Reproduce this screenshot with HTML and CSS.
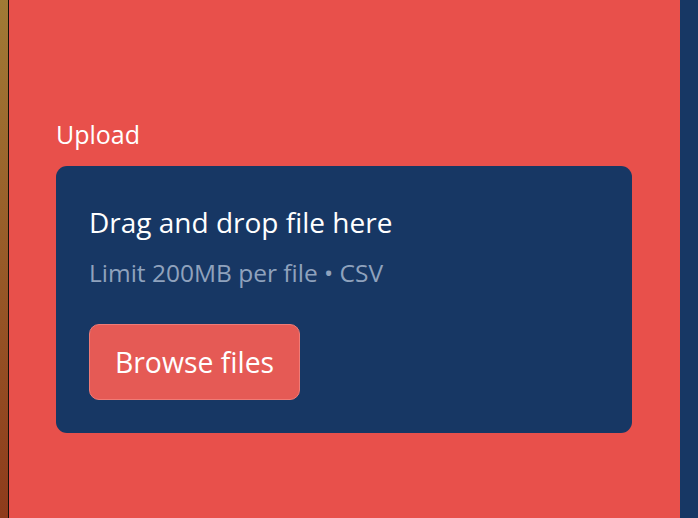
FILE: index.html
```html
<!DOCTYPE html>
<html>
<head>
<meta charset="utf-8">
<link rel="stylesheet" href="styles.css">
</head>
<body>
<div class="frame">
  <div class="edge"></div>
  <main class="panel">
    <div class="uploader">
      <label class="label">Upload</label>
      <section class="dropzone">
        <div class="instructions">
          <div class="title">Drag and drop file here</div>
          <div class="limit">Limit 200MB per file • CSV</div>
        </div>
        <button class="browse">Browse files</button>
      </section>
    </div>
  </main>
  <div class="side"></div>
</div>
</body>
</html>
```
FILE: styles.css
```css
* { box-sizing: border-box; }
html, body { margin: 0; padding: 0; height: 100%; }
body {
  font-family: "Open Sans", "Noto Sans", sans-serif;
  background: #e8504b;
  overflow: hidden;
}
.frame {
  display: flex;
  height: 518px;
}
.edge {
  width: 9px;
  flex: none;
  background: linear-gradient(#a07a35, #8e3b1b);
  border-right: 1px solid #1a1008;
  box-shadow: 1px 0 0 #f06a64;
}
.panel {
  flex: 1;
  background: #e8504b;
  padding: 116px 48px 0 47px;
}
.side {
  width: 18px;
  flex: none;
  background: #173764;
}
.uploader {
  display: flex;
  flex-direction: column;
  gap: 14px;
}
.label {
  color: #ffffff;
  font-size: 25px;
  line-height: 36px;
}
.dropzone {
  background: #173764;
  border-radius: 11px;
  height: 267px;
  padding: 36px 33px 0;
  display: flex;
  flex-direction: column;
  align-items: flex-start;
}
.title {
  color: #ffffff;
  font-size: 28px;
  line-height: 40px;
}
.limit {
  color: #8fa2bd;
  font-size: 24.5px;
  line-height: 34px;
  margin-top: 14px;
}
.browse {
  margin-top: 34px;
  font-family: inherit;
  background: #e55a55;
  color: #ffffff;
  border: 1px solid #f07b76;
  border-radius: 10px;
  width: 211px;
  height: 76px;
  font-size: 28.4px;
  padding: 0;
}
```
